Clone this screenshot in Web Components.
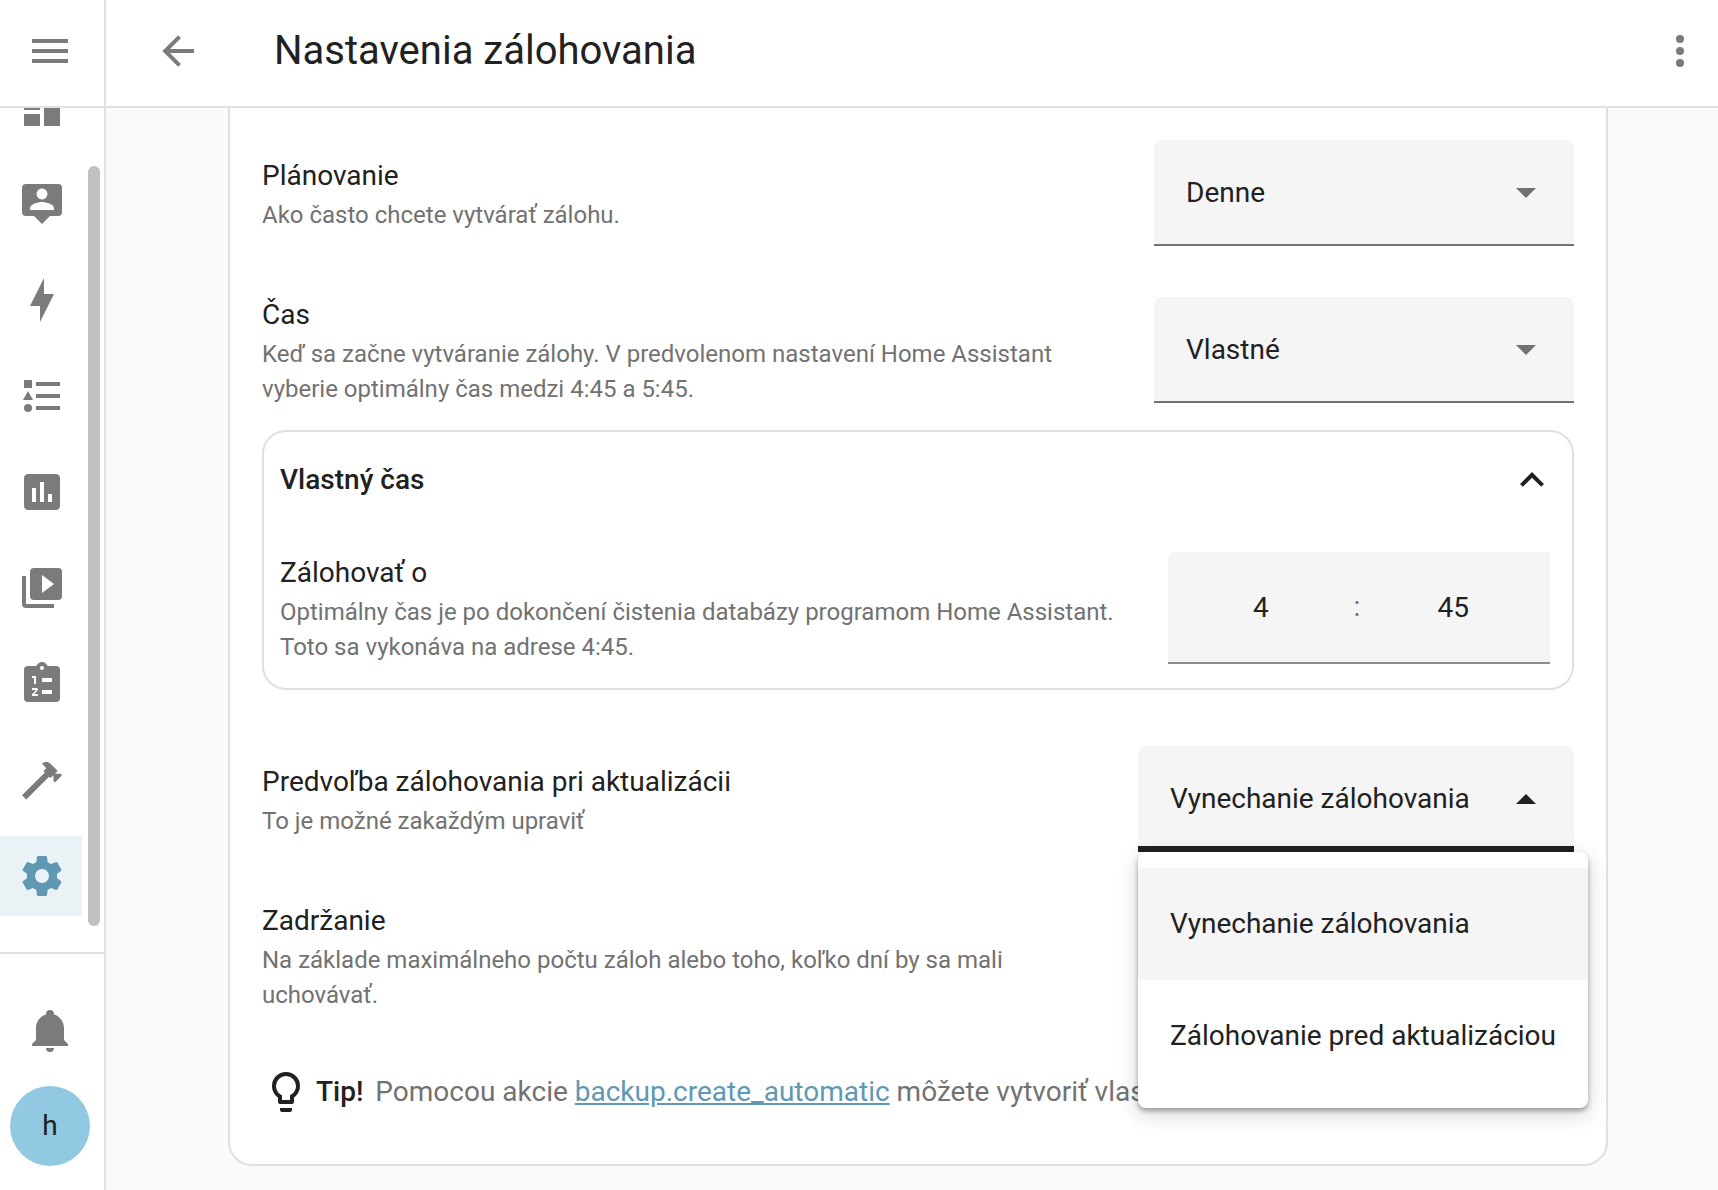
<!DOCTYPE html>
<html lang="sk">
<head>
<meta charset="utf-8">
<meta name="viewport" content="width=device-width, initial-scale=1">
<title>Nastavenia zálohovania</title>
<style>
  :root {
    --primary-text: #212121;
    --secondary-text: #727272;
    --icon: #7b7b7b;
    --accent: #5f98b3;
    --divider: #e0e0e0;
    --field: #f5f5f5;
  }
  body {
    margin: 0;
    font: 28px/44px Roboto, "Noto Sans", sans-serif;
    color: var(--primary-text);
    background: #fafafa;
  }
</style>
</head>
<body>
<app-shell>
  <app-sidebar slot="sidebar"></app-sidebar>
  <page-header slot="header">Nastavenia zálohovania</page-header>
  <settings-card>
    <select-row heading="Plánovanie" description="Ako často chcete vytvárať zálohu." options="Denne"></select-row>
    <select-row heading="Čas" description="Keď sa začne vytváranie zálohy. V predvolenom nastavení Home Assistant vyberie optimálny čas medzi 4:45 a 5:45." options="Vlastné"></select-row>
    <expansion-panel heading="Vlastný čas">
      <time-row heading="Zálohovať o" description="Optimálny čas je po dokončení čistenia databázy programom Home Assistant. Toto sa vykonáva na adrese 4:45." hours="4" minutes="45"></time-row>
    </expansion-panel>
    <select-row open heading="Predvoľba zálohovania pri aktualizácii" description="To je možné zakaždým upraviť" options="Vynechanie zálohovania|Zálohovanie pred aktualizáciou"></select-row>
    <select-row heading="Zadržanie" description="Na základe maximálneho počtu záloh alebo toho, koľko dní by sa mali uchovávať." options=""></select-row>
    <tip-note>Pomocou akcie <a href="#backup">backup.create_automatic</a> môžete vytvoriť vlastný plán.</tip-note>
  </settings-card>
</app-shell>

<script>
const ICONS = {
  menu: 'M3,6H21V8H3V6M3,11H21V13H3V11M3,16H21V18H3V16Z',
  back: 'M20,11V13H8L13.5,18.5L12.08,19.92L4.16,12L12.08,4.08L13.5,5.5L8,11H20Z',
  dots: 'M12,16A2,2 0 0,1 14,18A2,2 0 0,1 12,20A2,2 0 0,1 10,18A2,2 0 0,1 12,16M12,10A2,2 0 0,1 14,12A2,2 0 0,1 12,14A2,2 0 0,1 10,12A2,2 0 0,1 12,10M12,4A2,2 0 0,1 14,6A2,2 0 0,1 12,8A2,2 0 0,1 10,6A2,2 0 0,1 12,4Z',
  dashboard: 'M13,3V9H21V3M13,21H21V11H13M3,21H11V15H3M3,13H11V3H3V13Z',
  map: 'M20,2A2,2 0 0,1 22,4V16A2,2 0 0,1 20,18H16L12,22L8,18H4A2,2 0 0,1 2,16V4A2,2 0 0,1 4,2H20M12,4.3C10.5,4.3 9.3,5.5 9.3,7C9.3,8.5 10.5,9.7 12,9.7C13.5,9.7 14.7,8.5 14.7,7C14.7,5.5 13.5,4.3 12,4.3M18,15V14.1C18,12.1 14,11 12,11C10,11 6,12.1 6,14.1V15H18Z',
  energy: 'M11,15H6L13,1V9H18L11,23V15Z',
  logbook: 'M5,9.5L7.5,14H2.5L5,9.5M3,4H7V8H3V4M5,20A2,2 0 0,0 7,18A2,2 0 0,0 5,16A2,2 0 0,0 3,18A2,2 0 0,0 5,20M9,5V7H21V5H9M9,19H21V17H9V19M9,13H21V11H9V13Z',
  history: 'M9,17H7V10H9V17M13,17H11V7H13V17M17,17H15V13H17V17M19,3H5C3.9,3 3,3.9 3,5V19C3,20.1 3.9,21 5,21H19C20.1,21 21,20.1 21,19V5C21,3.9 20.1,3 19,3Z',
  media: 'M4,6H2V20A2,2 0 0,0 4,22H18V20H4V6M20,2H8A2,2 0 0,0 6,4V16A2,2 0 0,0 8,18H20A2,2 0 0,0 22,16V4A2,2 0 0,0 20,2M12,14.5V5.5L18,10L12,14.5Z',
  todo: 'M19,3H14.82C14.4,1.84 13.3,1 12,1C10.7,1 9.6,1.84 9.18,3H5A2,2 0 0,0 3,5V19A2,2 0 0,0 5,21H19A2,2 0 0,0 21,19V5A2,2 0 0,0 19,3M12,3A1,1 0 0,1 13,4A1,1 0 0,1 12,5A1,1 0 0,1 11,4A1,1 0 0,1 12,3M7,8H9V12H8V9H7V8M10,17V18H7V17.08L9,15H7V14H9.25A0.75,0.75 0 0,1 10,14.75C10,14.95 9.92,15.14 9.79,15.27L8.12,17H10M12,9H17V11H12V9M12,15H17V17H12V15Z',
  tools: 'M2,19.63L13.43,8.2L12.72,7.5L14.14,6.07L12,3.89C13.2,2.7 15.09,2.7 16.27,3.89L19.87,7.5L18.45,8.91H21.29L22,9.62L18.45,13.21L17.74,12.5V9.62L16.27,11.04L15.56,10.33L4.13,21.76L2,19.63Z',
  settings: 'M12,15.5A3.5,3.5 0 0,1 8.5,12A3.5,3.5 0 0,1 12,8.5A3.5,3.5 0 0,1 15.5,12A3.5,3.5 0 0,1 12,15.5M19.43,12.97C19.47,12.65 19.5,12.33 19.5,12C19.5,11.67 19.47,11.34 19.43,11L21.54,9.37C21.73,9.22 21.78,8.95 21.66,8.73L19.66,5.27C19.54,5.05 19.27,4.96 19.05,5.05L16.56,6.05C16.04,5.66 15.5,5.32 14.87,5.07L14.5,2.42C14.46,2.18 14.25,2 14,2H10C9.75,2 9.54,2.18 9.5,2.42L9.13,5.07C8.5,5.32 7.96,5.66 7.44,6.05L4.95,5.05C4.73,4.96 4.46,5.05 4.34,5.27L2.34,8.73C2.21,8.95 2.27,9.22 2.46,9.37L4.57,11C4.53,11.34 4.5,11.67 4.5,12C4.5,12.33 4.53,12.65 4.57,12.97L2.46,14.63C2.27,14.78 2.21,15.05 2.34,15.27L4.34,18.73C4.46,18.95 4.73,19.03 4.95,18.95L7.44,17.94C7.96,18.34 8.5,18.68 9.13,18.93L9.5,21.58C9.54,21.82 9.75,22 10,22H14C14.25,22 14.46,21.82 14.5,21.58L14.87,18.93C15.5,18.67 16.04,18.34 16.56,17.94L19.05,18.95C19.27,19.03 19.54,18.95 19.66,18.73L21.66,15.27C21.78,15.05 21.73,14.78 21.54,14.63L19.43,12.97Z',
  bell: 'M21,19V20H3V19L5,17V11C5,7.9 7.03,5.17 10,4.29C10,4.19 10,4.1 10,4A2,2 0 0,1 12,2A2,2 0 0,1 14,4C14,4.1 14,4.19 14,4.29C16.97,5.17 19,7.9 19,11V17L21,19M14,21A2,2 0 0,1 12,23A2,2 0 0,1 10,21',
  bulb: 'M12,2A7,7 0 0,1 19,9C19,11.38 17.81,13.47 16,14.74V17A1,1 0 0,1 15,18H9A1,1 0 0,1 8,17V14.74C6.19,13.47 5,11.38 5,9A7,7 0 0,1 12,2M9,21V20H15V21A1,1 0 0,1 14,22H10A1,1 0 0,1 9,21M12,4A5,5 0 0,0 7,9C7,11.05 8.23,12.81 10,13.58V16H14V13.58C15.77,12.81 17,11.05 17,9A5,5 0 0,0 12,4Z',
  chevronUp: 'M7.41,15.41L12,10.83L16.59,15.41L18,14L12,8L6,14L7.41,15.41Z'
};

const BASE = `
  :host, *, *::before, *::after { box-sizing: border-box; }
  button { font: inherit; color: inherit; background: none; border: 0; padding: 0; margin: 0; cursor: pointer; }
`;

const ROW = `
  :host { display: block; }
  .row { display: flex; align-items: center; justify-content: space-between; gap: 32px; }
  .text { flex: 1; min-width: 0; }
  .text label { display: block; }
  .text p { margin: 0; font-size: 24px; line-height: 35px; color: var(--secondary-text); }
`;

class BaseElement extends HTMLElement {
  connectedCallback() {
    if (this.shadowRoot) return;
    this.attachShadow({ mode: 'open' }).innerHTML =
      `<style>${BASE}${this.styles()}</style>${this.render()}`;
  }
}

customElements.define('mdi-icon', class extends BaseElement {
  styles() { return ':host { display: block; width: 48px; height: 48px; flex: none; } svg { display: block; fill: currentColor; }'; }
  render() {
    return `<svg width="48" height="48" viewBox="0 0 24 24" aria-hidden="true"><path fill-rule="evenodd" d="${ICONS[this.getAttribute('name')]}"/></svg>`;
  }
});

customElements.define('app-shell', class extends BaseElement {
  styles() {
    return `
      :host { display: grid; grid-template-columns: auto minmax(0, 1fr); height: 100vh; overflow: hidden; }
      .page { display: flex; flex-direction: column; min-height: 0; }
      main { flex: 1; min-height: 0; overflow: hidden; padding-left: 12px; }
    `;
  }
  render() {
    return `<slot name="sidebar"></slot>
      <div class="page"><slot name="header"></slot><main><slot></slot></main></div>`;
  }
});

customElements.define('app-sidebar', class extends BaseElement {
  styles() {
    return `
      :host { display: flex; flex-direction: column; width: 106px; min-height: 0; background: #fff; border-right: 2px solid var(--divider); color: var(--icon); }
      .top { display: flex; align-items: center; justify-content: center; height: 108px; padding: 0 4px 4px 0; border-bottom: 2px solid var(--divider); flex: none; }
      .scroller { flex: 1; min-height: 0; display: flex; justify-content: space-between; overflow: hidden; }
      nav { display: flex; flex-direction: column; gap: 16px; width: 82px; margin-top: -40px; }
      nav a { display: flex; align-items: center; height: 80px; padding: 0 18px; color: inherit; flex: none; }
      nav a[aria-current] { color: var(--accent); background: #eaf2f6; }
      .track { display: flex; width: 12px; margin: 58px 4px 26px 0; }
      .thumb { flex: 1; border-radius: 6px; background: #c1c1c1; }
      .bottom { display: flex; flex-direction: column; align-items: center; gap: 32px; padding: 52px 4px 24px 0; border-top: 2px solid var(--divider); flex: none; }
      .avatar { width: 80px; height: 80px; border-radius: 50%; background: #91c8e2; color: var(--primary-text); text-align: center; line-height: 80px; }
    `;
  }
  render() {
    const items = [['dashboard', 'Prehľad'], ['map', 'Mapa'], ['energy', 'Energia'], ['logbook', 'Denník'],
      ['history', 'História'], ['media', 'Médiá'], ['todo', 'Úlohy'], ['tools', 'Nástroje'], ['settings', 'Nastavenia']];
    return `
      <div class="top"><button aria-label="Ponuka"><mdi-icon name="menu"></mdi-icon></button></div>
      <div class="scroller">
        <nav>${items.map(([icon, label]) =>
          `<a href="#${icon}" aria-label="${label}"${icon === 'settings' ? ' aria-current="page"' : ''}><mdi-icon name="${icon}"></mdi-icon></a>`).join('')}</nav>
        <div class="track"><div class="thumb"></div></div>
      </div>
      <div class="bottom">
        <button aria-label="Oznámenia"><mdi-icon name="bell"></mdi-icon></button>
        <button class="avatar">h</button>
      </div>`;
  }
});

customElements.define('page-header', class extends BaseElement {
  styles() {
    return `
      :host { display: flex; align-items: center; height: 108px; padding: 0 14px 4px 48px; background: #fff; border-bottom: 2px solid var(--divider); flex: none; }
      button { color: var(--icon); }
      h1 { flex: 1; margin: 0 0 0 72px; font-size: 40px; line-height: 48px; font-weight: 400; }
    `;
  }
  render() {
    return `<button aria-label="Späť"><mdi-icon name="back"></mdi-icon></button>
      <h1><slot></slot></h1>
      <button aria-label="Viac"><mdi-icon name="dots"></mdi-icon></button>`;
  }
});

customElements.define('settings-card', class extends BaseElement {
  styles() {
    return `
      :host { display: block; max-width: 1380px; margin: 0 auto; padding: 6px 32px 48px; background: #fff;
        border: 2px solid var(--divider); border-top: 0; border-radius: 0 0 24px 24px; }
    `;
  }
  render() { return '<slot></slot>'; }
});

customElements.define('select-row', class extends BaseElement {
  styles() {
    return ROW + `
      .row { min-height: 157px; padding: 17px 0 16px; }
      .field { position: relative; display: flex; align-items: center; width: 420px; flex: none; }
      select { appearance: none; width: 100%; height: 106px; margin: 0; padding: 2px 70px 0 32px; font: inherit; color: inherit;
        background: var(--field); border: 0; border-bottom: 2px solid #717171; border-radius: 8px 8px 0 0; outline: 0; }
      .arrow { position: absolute; right: 38px; width: 20px; height: 10px; fill: #717171; pointer-events: none; }
      :host([open]) .field { width: 436px; }
      :host([open]) select { padding-top: 6px; border-bottom: 6px solid var(--primary-text); }
      :host([open]) .arrow { fill: var(--primary-text); }
      .menu { position: absolute; z-index: 1; top: 100%; left: 0; margin: 0; padding: 16px 0; list-style: none; white-space: nowrap;
        background: #fff; border-radius: 8px; box-shadow: 0 3px 5px rgba(0,0,0,.32), 0 6px 20px 2px rgba(0,0,0,.14); }
      .menu li { padding: 34px 32px; }
      .menu li[aria-selected="true"] { background: var(--field); }
    `;
  }
  render() {
    const open = this.hasAttribute('open');
    const options = this.getAttribute('options').split('|');
    return `
      <div class="row">
        <div class="text">
          <label for="value">${this.getAttribute('heading')}</label>
          <p>${this.getAttribute('description')}</p>
        </div>
        <div class="field">
          <select id="value">${options.map(o => `<option>${o}</option>`).join('')}</select>
          <svg class="arrow" viewBox="0 0 20 10" aria-hidden="true"><path d="${open ? 'M0,10L10,0L20,10Z' : 'M0,0L10,10L20,0Z'}"/></svg>
          ${open ? `<ul class="menu" role="listbox">${options.map((o, i) => `<li role="option" aria-selected="${i === 0}">${o}</li>`).join('')}</ul>` : ''}
        </div>
      </div>`;
  }
});

customElements.define('expansion-panel', class extends BaseElement {
  styles() {
    return `
      :host { display: block; margin: 2px 0 30px; border: 2px solid var(--divider); border-radius: 24px; }
      button { display: flex; align-items: center; justify-content: space-between; width: 100%; height: 96px; padding: 0 16px; font-weight: 500; text-align: left; }
      .content { padding: 23px 22px 23px 16px; }
    `;
  }
  render() {
    return `<button aria-expanded="true">${this.getAttribute('heading')}<mdi-icon name="chevronUp"></mdi-icon></button>
      <div class="content"><slot></slot></div>`;
  }
});

customElements.define('time-row', class extends BaseElement {
  styles() {
    return ROW + `
      .time { display: flex; align-items: center; width: 382px; height: 112px; padding-right: 4px; flex: none;
        background: var(--field); border-bottom: 2px solid #8c8c8c; border-radius: 8px 0 0 0; color: var(--secondary-text); }
      input { flex: 1; min-width: 0; height: 100%; padding: 0; border: 0; background: none; outline: 0; font: inherit; color: var(--primary-text); text-align: center; }
    `;
  }
  render() {
    return `
      <div class="row">
        <div class="text">
          <label for="hours">${this.getAttribute('heading')}</label>
          <p>${this.getAttribute('description')}</p>
        </div>
        <div class="time">
          <input id="hours" inputmode="numeric" value="${this.getAttribute('hours')}"><span>:</span><input aria-label="Minúty" inputmode="numeric" value="${this.getAttribute('minutes')}">
        </div>
      </div>`;
  }
});

customElements.define('tip-note', class extends BaseElement {
  styles() {
    return `
      :host { display: flex; align-items: center; margin-top: 34px; color: var(--secondary-text); }
      mdi-icon { color: var(--primary-text); }
      p { margin: 0 0 0 6px; line-height: 48px; }
      strong { font-weight: 500; color: var(--primary-text); margin-right: 12px; }
      ::slotted(a) { color: var(--accent); }
    `;
  }
  render() { return '<mdi-icon name="bulb"></mdi-icon><p><strong>Tip!</strong><slot></slot></p>'; }
});
</script>
</body>
</html>
